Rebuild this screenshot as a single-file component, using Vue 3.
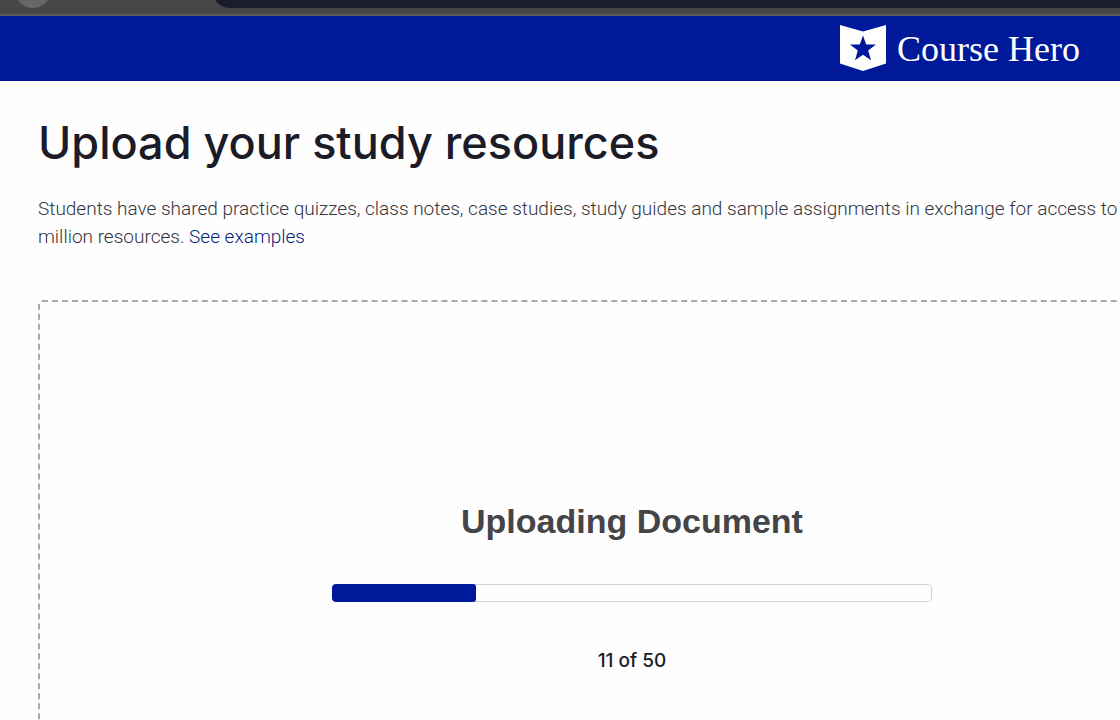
<script setup>
import { ref } from 'vue'

const uploaded = ref(11)
const total = ref(50)
const percent = ref(24)
</script>

<template>
  <div class="page">
    <div class="browser" aria-hidden="true">
      <span class="knob"></span>
      <span class="address"></span>
    </div>
    <header class="topbar">
      <a class="brand" href="#">
        <svg class="badge" viewBox="0 0 46 46" aria-hidden="true">
          <path fill="#fff" d="M0 0 23 6.500 46 0V38.500L23 46 0 38.500Z" />
          <path fill="#00199a" d="M23 10.500 26.200 19.500H36L28.200 25.600 31 35.300 23 29.800 15 35.300 17.800 25.600 10 19.500H19.800Z" />
        </svg>
        <span>Course Hero</span>
      </a>
    </header>
    <main class="content">
      <h1>Upload your study resources</h1>
      <p class="intro">
        Students have shared practice quizzes, class notes, case studies, study guides and sample assignments in exchange for access to<br />
        million resources. <a href="#">See examples</a>
      </p>
      <section class="dropzone">
        <h2><label for="upload">Uploading Document</label></h2>
        <progress id="upload" :value="percent" max="100"></progress>
        <p class="count">{{ uploaded }} of {{ total }}</p>
      </section>
    </main>
  </div>
</template>

<style>
body {
  background: #fefefe;
}
</style>

<style scoped>
.page {
  height: 100vh;
  overflow: hidden;
  display: flex;
  flex-direction: column;
  font-family: "Liberation Sans", Arial, sans-serif;
  color: #1b1c28;
}
.browser {
  flex: none;
  display: flex;
  height: 14px;
  overflow: hidden;
  background: #464747;
  border-bottom: 2px solid #5c5d5d;
}
.knob {
  flex: none;
  width: 36px;
  height: 36px;
  margin: -28px 0 0 15px;
  border-radius: 50%;
  background: #666767;
}
.address {
  flex: 1;
  height: 36px;
  margin: -28px 0 0 161px;
  border-radius: 18px 0 0 18px;
  background: #1c1d2b;
}
.topbar {
  flex: none;
  box-sizing: border-box;
  display: flex;
  justify-content: flex-end;
  align-items: center;
  height: 65px;
  padding: 0 40px 1px 0;
  background: #00199a;
}
.brand {
  display: flex;
  align-items: center;
  gap: 11px;
  color: #fff;
  text-decoration: none;
  font: 36px/48px "Liberation Serif", "Times New Roman", serif;
  white-space: nowrap;
}
.brand span {
  padding-top: 2px;
}
.badge {
  width: 46px;
  height: 46px;
}
.content {
  flex: 1;
  display: flex;
  flex-direction: column;
  margin-right: -106px;
  padding: 32px 0 0 38px;
}
h1 {
  margin: 0;
  font: 500 45px/60px Inter, "Liberation Sans", sans-serif;
}
.intro {
  margin: 22px 0 0;
  font: 300 19px/28px Roboto, "Liberation Sans", sans-serif;
  color: #34343a;
  white-space: nowrap;
}
.intro a {
  color: #061f7c;
  text-decoration: none;
}
.dropzone {
  flex: 1;
  display: flex;
  flex-direction: column;
  align-items: center;
  margin-top: 49px;
  padding: 195px 0 80px;
  border: 2px dashed #a9a9a9;
  border-radius: 4px;
}
h2 {
  margin: 0;
  font-size: 34px;
  line-height: 48px;
  color: #454547;
}
progress {
  appearance: none;
  width: 600px;
  height: 18px;
  margin-top: 39px;
  border: none;
  border-radius: 4px;
  overflow: hidden;
}
progress::-webkit-progress-bar {
  background: #fefefe;
  border-radius: 4px;
  box-shadow: inset 0 0 0 1px #d4d4d6;
}
progress::-webkit-progress-value {
  background: #00199a;
  border-radius: 3px;
}
.count {
  margin: 45px 0 0;
  font: 500 19px/28px Inter, "Liberation Sans", sans-serif;
}
</style>
